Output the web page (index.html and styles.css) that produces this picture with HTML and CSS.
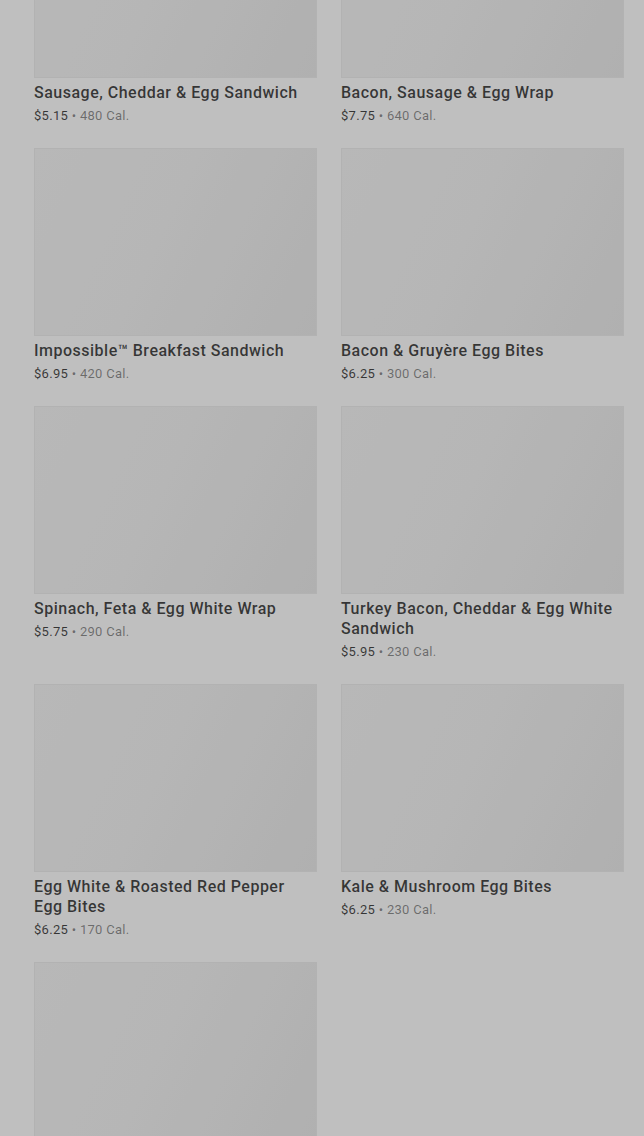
FILE: index.html
```html
<!DOCTYPE html>
<html lang="en">
<head>
  <meta charset="UTF-8" />
  <meta name="viewport" content="width=device-width, initial-scale=1" />
  <title>Hot Breakfast</title>
  <link rel="stylesheet" href="styles.css">
</head>
<body>
  <main class="menu-grid">
    <a class="product" href="#">
      <div class="product-img"></div>
      <h3>Sausage, Cheddar &amp; Egg Sandwich</h3>
      <p class="meta"><span class="price">$5.15</span> • 480 Cal.</p>
    </a>
    <a class="product" href="#">
      <div class="product-img"></div>
      <h3>Bacon, Sausage &amp; Egg Wrap</h3>
      <p class="meta"><span class="price">$7.75</span> • 640 Cal.</p>
    </a>
    <a class="product" href="#">
      <div class="product-img"></div>
      <h3>Impossible™ Breakfast Sandwich</h3>
      <p class="meta"><span class="price">$6.95</span> • 420 Cal.</p>
    </a>
    <a class="product" href="#">
      <div class="product-img"></div>
      <h3>Bacon &amp; Gruyère Egg Bites</h3>
      <p class="meta"><span class="price">$6.25</span> • 300 Cal.</p>
    </a>
    <a class="product" href="#">
      <div class="product-img"></div>
      <h3>Spinach, Feta &amp; Egg White Wrap</h3>
      <p class="meta"><span class="price">$5.75</span> • 290 Cal.</p>
    </a>
    <a class="product" href="#">
      <div class="product-img"></div>
      <h3>Turkey Bacon, Cheddar &amp; Egg White Sandwich</h3>
      <p class="meta"><span class="price">$5.95</span> • 230 Cal.</p>
    </a>
    <a class="product" href="#">
      <div class="product-img"></div>
      <h3>Egg White &amp; Roasted Red Pepper Egg Bites</h3>
      <p class="meta"><span class="price">$6.25</span> • 170 Cal.</p>
    </a>
    <a class="product" href="#">
      <div class="product-img"></div>
      <h3>Kale &amp; Mushroom Egg Bites</h3>
      <p class="meta"><span class="price">$6.25</span> • 230 Cal.</p>
    </a>
    <a class="product" href="#">
      <div class="product-img"></div>
    </a>
  </main>

  <div class="backdrop"></div>
</body>
</html>
```

FILE: styles.css
```css
* { margin: 0; padding: 0; box-sizing: border-box; }
body {
  font-family: "Roboto", "Liberation Sans", sans-serif;
  background: #ffffff;
  color: #1e1e1e;
  overflow: hidden;
}
.menu-grid {
  display: grid;
  grid-template-columns: 283px 283px;
  column-gap: 24px;
  padding: 0 20px 0 34px;
  margin-top: -110px;
}
.product {
  display: block;
  text-decoration: none;
  color: inherit;
  padding-bottom: 23px;
}
.product-img {
  height: 188px;
  background: linear-gradient(115deg, #f6f6f6 0%, #f3f3f3 45%, #ebebeb 100%);
  border: 1px solid #eeeeee;
}
.product h3 {
  margin-top: 5px;
  font-size: 16px;
  line-height: 20px;
  font-weight: 500;
  letter-spacing: 0.5px;
  color: rgba(0, 0, 0, 0.72);
}
.meta {
  margin-top: 4px;
  font-size: 13px;
  line-height: 18px;
  color: rgba(0, 0, 0, 0.45);
  letter-spacing: 0.3px;
}
.price {
  color: rgba(0, 0, 0, 0.72);
}
.backdrop {
  position: fixed;
  inset: 0;
  background: rgba(0, 0, 0, 0.25);
}
```
